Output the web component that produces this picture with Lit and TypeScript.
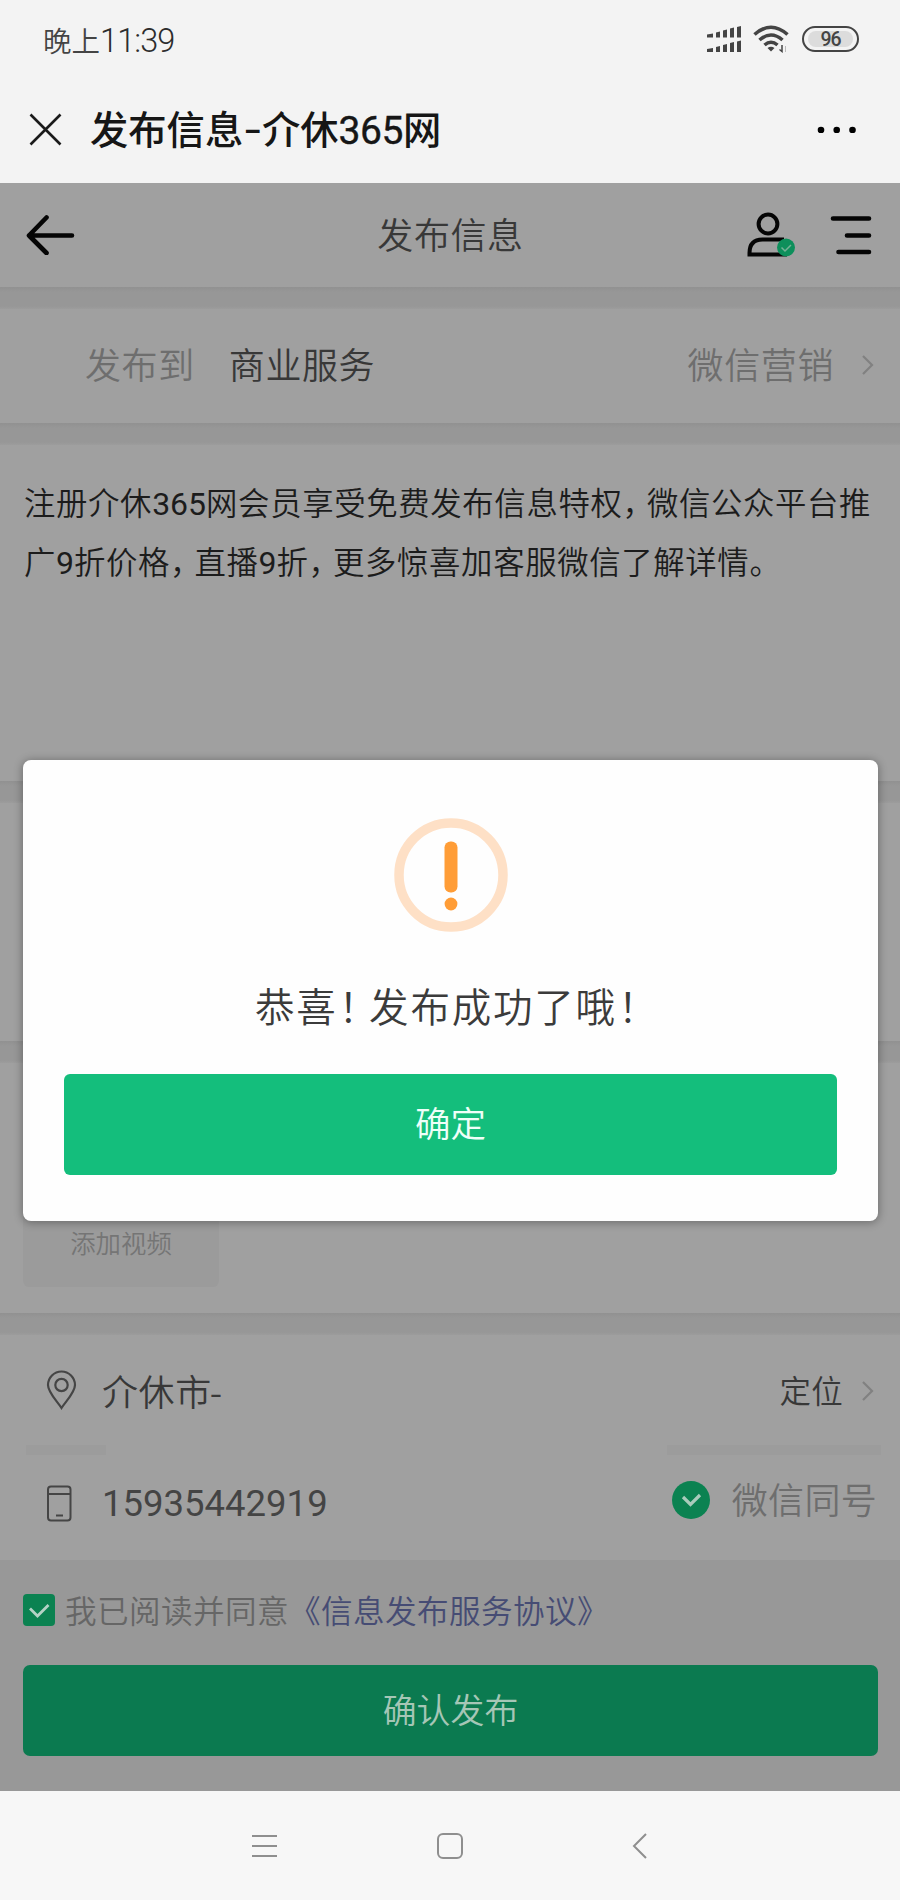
import { LitElement, html, svg, css } from "lit";
import { customElement } from "lit/decorators.js";

const chevron = html`<svg class="chev" width="14" height="22" viewBox="0 0 14 22">
  <path d="M2 2l9 9-9 9" fill="none" stroke="#818181" stroke-width="2.200" />
</svg>`;

const signalRow = (y: number) =>
  [4, 6, 8, 10, 11.5].map(
    (h, i) => svg`<path d="M${i === 0 ? 0 : 2 + i * 7} ${y}v${-h + 1}l${i === 0 ? 6 : 4} -1v${h}z" />`
  );

@customElement("status-bar")
class StatusBar extends LitElement {
  static styles = css`
    :host { display: flex; align-items: center; justify-content: space-between; height: 80px; padding: 0 41px 0 43px; color: #444; }
    .time { margin-top: 1px; font: 350 28.500px/40px "Noto Sans CJK SC", sans-serif; white-space: nowrap; }
    .clock { font: 300 32.500px/40px Roboto, sans-serif; letter-spacing: -0.900px; color: #2c2c2c; }
    .icons { display: flex; align-items: center; margin-top: -2px; }
    .signal { margin-right: 12px; }
    .wifi { margin-right: 12px; }
    .battery { box-sizing: border-box; width: 57px; height: 26px; border: 2px solid #444; border-radius: 13px; padding: 3px 4px; }
    .level { width: 45px; height: 16px; background: #dcdcdc; border-radius: 8px; font: 500 19.500px/17px Roboto, sans-serif; text-align: center; letter-spacing: -1px; }
  `;
  render() {
    return html`
      <div class="time">晚上<span class="clock">11:39</span></div>
      <div class="icons">
        <svg class="signal" width="34" height="28" viewBox="0 0 34 28" fill="#444">${signalRow(12.5)}${signalRow(27)}</svg>
        <svg class="wifi" width="37" height="28" viewBox="0 0 37 28" fill="none" stroke="#444" stroke-width="3.600">
          <path d="M1.500 9.500Q18 -5 34.500 9.500" /><path d="M6.500 15Q18 5 29.500 15" /><path d="M11.500 20Q18 14.500 24.500 20" />
          <path d="M18 26.500l-3.500-3.500q3.500-2.500 7 0z" fill="#444" stroke="none" />
          <path d="M29 20v6.500l-2.500-2" stroke-width="1.500" /><path d="M32.500 27v-6" stroke="#bbb" stroke-width="1" />
        </svg>
        <div class="battery"><div class="level">96</div></div>
      </div>
    `;
  }
}

@customElement("browser-bar")
class BrowserBar extends LitElement {
  static styles = css`
    :host { display: flex; align-items: center; height: 103px; padding: 0 43px 5px 29px; box-sizing: border-box; }
    .title { flex: 1; margin: 1px 0 0 28px; font: 450 38.300px/60px "Noto Sans CJK SC", sans-serif; color: #161616; white-space: nowrap; }
    .dash { display: inline-block; transform: translateY(-2px) scaleX(1.350); margin: 0 2px 0 3px; }
    .digits { font: 400 39px/60px Roboto, sans-serif; letter-spacing: -0.400px; -webkit-text-stroke: 0.400px #161616; }
  `;
  render() {
    return html`
      <svg width="33" height="33" viewBox="0 0 33 33"><path d="M1.500 1.500l30 30M31.500 1.500l-30 30" stroke="#1a1a1a" stroke-width="2.600" /></svg>
      <div class="title">发布信息<span class="dash">-</span>介休<span class="digits">365</span>网</div>
      <svg width="40" height="8" viewBox="0 0 40 8"><circle cx="4" cy="5" r="3.300" /><circle cx="19.700" cy="5" r="3.300" /><circle cx="35.500" cy="5" r="3.300" /></svg>
    `;
  }
}

@customElement("success-dialog")
class SuccessDialog extends LitElement {
  static styles = css`
    :host { display: flex; flex-direction: column; align-items: center; box-sizing: border-box; width: 855px; height: 461px; padding: 58px 41px 46px; background: #fefefe; border-radius: 8px; box-shadow: 0 1px 8px 1px rgba(0, 0, 0, 0.3); }
    .msg { align-self: flex-start; margin: 45px 0 0 191px; font: 350 39.500px/56px "Noto Sans CJK SC", sans-serif; letter-spacing: 1.800px; color: #3b3b3b; white-space: nowrap; }
    .mark { margin-left: 1px; letter-spacing: -9px; }
    .ok { margin-top: auto; align-self: stretch; height: 101px; border-radius: 6px; background: #14be7c; color: #eefff8; text-align: center; font: 350 35.500px/96px "Noto Sans CJK SC", sans-serif; }
  `;
  render() {
    return html`
      <svg width="114" height="114" viewBox="0 0 114 114">
        <circle cx="57" cy="57" r="52" fill="none" stroke="#fee0c6" stroke-width="9.500" />
        <rect x="50.500" y="23.500" width="13" height="51" rx="6" fill="#ff9d37" /><circle cx="57" cy="86" r="6.400" fill="#ff9d37" />
      </svg>
      <div class="msg">恭喜<span class="mark">！</span>发布成功了哦<span class="mark">！</span></div>
      <div class="ok">确定</div>
    `;
  }
}

@customElement("app-root")
class AppRoot extends LitElement {
  static styles = css`
    :host { display: block; position: relative; width: 900px; height: 1900px; overflow: hidden; background: #f3f3f3; font-family: "Noto Sans CJK SC", sans-serif; font-weight: 350; color: #383838; }
    .page { display: flex; flex-direction: column; height: 1608px; background: #a0a0a0; box-sizing: border-box; }
    .gap { flex: none; height: 22px; background: linear-gradient(#919191, #979797 5px, #979797 19px, #9c9c9c); }
    .bar { display: grid; grid-template-columns: 130px 1fr 130px; align-items: center; height: 104px; padding: 0 27px 1px 26px; box-sizing: border-box; }
    .bar-title { text-align: center; font-size: 36px; letter-spacing: 0.600px; line-height: 50px; margin: -3px 0 0 2px; }
    .tools { display: flex; justify-content: flex-end; align-items: center; gap: 34px; margin-right: 1px; }
    .row { display: flex; align-items: center; box-sizing: border-box; white-space: nowrap; }
    .category { height: 114px; padding: 0 25px 6px 85px; font-size: 36px; letter-spacing: 0.600px; }
    .muted { color: #6e6e6e; }
    .value { margin-left: 34px; }
    .push { margin-left: auto; }
    .chev { margin-left: 27px; margin-top: 3px; }
    .body { height: 336px; box-sizing: border-box; padding: 27px 24px 0; font-size: 31.400px; letter-spacing: 0.640px; line-height: 59px; color: #1c1c1c; white-space: nowrap; }
    .num { font: 400 32px/50px Roboto, sans-serif; letter-spacing: 0; }
    .comma { letter-spacing: -7px; }
    .photos { height: 238px; }
    .video { height: 250px; padding: 30px 23px 26px; box-sizing: border-box; }
    .tile { display: flex; align-items: center; justify-content: center; width: 196px; height: 194px; box-sizing: border-box; padding: 104px 0 0; border-radius: 6px; background: #9b9b9b; color: #757575; font-size: 25.400px; }
    .place { height: 110px; padding: 0 25px 1px 46px; font-size: 36px; letter-spacing: 0.600px; }
    .place-name { margin-left: 25px; }
    .hyphen { margin-left: -2px; }
    .locate { font-size: 31.500px; letter-spacing: 0.300px; margin-top: -1px; }
    .place .chev { margin-left: 18px; }
    .rule { display: flex; justify-content: space-between; height: 10px; padding: 0 19px 0 26px; }
    .rule i { width: 80px; background: #9c9c9c; }
    .rule i + i { width: 214px; }
    .phone { height: 105px; padding: 0 23px 16px 46px; }
    .phone-number { margin-left: 29px; font: 400 36.500px/50px Roboto, sans-serif; letter-spacing: 0; color: #444; padding-top: 8px; }
    .phone-icon { margin-top: 7px; }
    .wechat { display: flex; align-items: center; gap: 22px; font-size: 36px; letter-spacing: 0.300px; }
    .wechat-label { margin-top: -4px; }
    .foot { flex: 1; background: #989898; padding: 29px 22px 0 23px; }
    .agree { height: 42px; font-size: 31.600px; line-height: 42px; letter-spacing: 0.400px; color: #666; }
    .agree svg { margin-right: 10px; }
    .agree-text { margin-top: -2px; }
    .link { color: #464c74; }
    .submit { height: 91px; margin-top: 34px; border-radius: 7px; background: #0b7a50; color: #a5c6b6; text-align: center; font-size: 33.900px; line-height: 88px; }
    .keys { display: flex; align-items: flex-start; height: 109px; padding: 41px 252px 0 251px; box-sizing: border-box; background: #f7f7f7; }
    .home { margin-left: 158px; }
    .overlay { position: absolute; left: 23px; top: 760px; }
  `;
  render() {
    return html`
      <status-bar></status-bar>
      <browser-bar></browser-bar>
      <main class="page">
        <header class="bar">
          <svg width="50" height="40" viewBox="0 0 50 40" fill="none" stroke="#050505" stroke-width="4.600" stroke-linecap="round" stroke-linejoin="round"><path d="M20.500 2.500L3 20.500l17.500 17.500M3 20.500h43" /></svg>
          <div class="bar-title">发布信息</div>
          <div class="tools">
            <svg width="49" height="46" viewBox="0 0 49 46" fill="none" stroke="#050505" stroke-width="4">
              <circle cx="21" cy="12" r="9.400" /><path d="M40 42.500H2.500V41q0-13.500 13-13.500H37" />
              <circle cx="39" cy="35.500" r="9" fill="#0d8f5b" stroke="none" /><path d="M34.500 35.500l3.500 3.500 6-6" stroke="#75b296" stroke-width="1.500" />
            </svg>
            <svg width="42" height="40" viewBox="0 0 42 40" stroke="#050505" stroke-width="4.600" stroke-linecap="round"><path d="M3 3.500h36M17 20.500h22M8.500 37H39" /></svg>
          </div>
        </header>
        <div class="gap"></div>
        <section class="row category">
          <span class="muted">发布到</span><span class="value">商业服务</span><span class="muted push">微信营销</span>${chevron}
        </section>
        <div class="gap"></div>
        <section class="body">注册介休<span class="num">365</span>网会员享受免费发布信息特权<span class="comma">，</span>微信公众平台推<br />广<span class="num">9</span>折价格<span class="comma">，</span>直播<span class="num">9</span>折<span class="comma">，</span>更多惊喜加客服微信了解详情。</section>
        <div class="gap"></div>
        <section class="photos"></section>
        <div class="gap"></div>
        <section class="video"><div class="tile">添加视频</div></section>
        <div class="gap"></div>
        <section class="row place">
          <svg width="31" height="40" viewBox="0 0 31 40" fill="none" stroke="#454545" stroke-width="2.200"><path d="M15.500 38C11 31 2 22.500 2 15a13.500 13.500 0 0 1 27 0C29 22.500 20 31 15.500 38z" /><circle cx="15.500" cy="15" r="6.200" /></svg>
          <span class="place-name">介休市<span class="hyphen">-</span></span><span class="locate push">定位</span>${chevron}
        </section>
        <div class="rule"><i></i><i></i></div>
        <section class="row phone">
          <svg class="phone-icon" width="27" height="37" viewBox="0 0 27 37" fill="none" stroke="#454545" stroke-width="2"><rect x="2" y="1.500" width="22.500" height="34" rx="3" /><path d="M2 9h22.500M10 30.500h7" /></svg>
          <span class="phone-number">15935442919</span>
          <span class="wechat muted push">
            <svg width="38" height="38" viewBox="0 0 38 38"><circle cx="19" cy="19" r="19" fill="#0b8251" /><path d="M11 16l7.500 7.500 9.500-9.500" fill="none" stroke="#a9cbbb" stroke-width="3.200" /></svg><span class="wechat-label">微信同号</span></span>
        </section>
        <footer class="foot">
          <div class="row agree">
            <svg width="32" height="32" viewBox="0 0 32 32"><rect width="32" height="32" rx="4" fill="#0b8251" /><path d="M7 14.500l7.500 7.500L25.500 11" fill="none" stroke="#b4d2c5" stroke-width="2.800" /></svg><span class="agree-text">我已阅读并同意<span class="link">《信息发布服务协议》</span></span>
          </div>
          <div class="submit">确认发布</div>
        </footer>
      </main>
      <nav class="keys">
        <svg width="27" height="28" viewBox="0 0 27 28" stroke="#8f8f8f" stroke-width="2"><path d="M1 4h25M1 14h25M1 24h25" /></svg>
        <svg class="home" width="28" height="28" viewBox="0 0 28 28" fill="none" stroke="#8f8f8f" stroke-width="2"><rect x="2" y="2" width="24" height="24" rx="5" /></svg>
        <svg class="push" width="16" height="28" viewBox="0 0 16 28" fill="none" stroke="#8f8f8f" stroke-width="2"><path d="M14 2L2 14l12 12" /></svg>
      </nav>
      <success-dialog class="overlay"></success-dialog>
    `;
  }
}
